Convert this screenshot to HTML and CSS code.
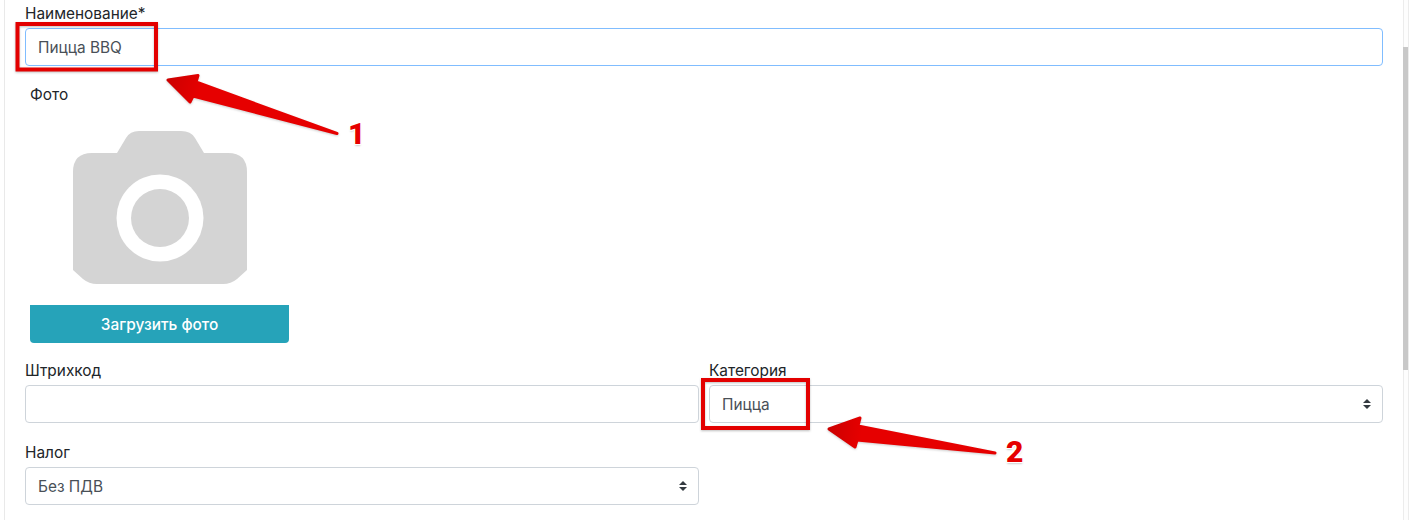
FILE: index.html
```html
<!DOCTYPE html>
<html lang="ru">
<head>
<meta charset="utf-8">
<title>Товар</title>
<link rel="stylesheet" href="styles.css">
</head>
<body>
<div class="page">
  <main class="panel">
    <div class="field field-name">
      <label class="label" for="name">Наименование*</label>
      <input class="control control-focus" id="name" type="text" value="Пицца BBQ">
    </div>
    <section class="photo">
      <div class="photo-label">Фото</div>
      <svg class="camera" width="174" height="153" viewBox="0 0 174 153" aria-hidden="true">
        <path fill="#d4d4d4" d="M44 22 L53 7 Q57 0 66 0 H108 Q118 0 122 7 L131 22 H155 Q174 22 174 41 V139 L164 148 Q158 153 150 153 H24 Q16 153 10 148 L0 139 V41 Q0 22 19 22 Z"/>
        <circle cx="87" cy="87" r="43.5" fill="#fff"/>
        <circle cx="87" cy="87" r="29" fill="#d4d4d4"/>
      </svg>
      <button class="upload" type="button">Загрузить фото</button>
    </section>
    <div class="grid">
      <div class="field">
        <label class="label" for="barcode">Штрихкод</label>
        <input class="control" id="barcode" type="text">
      </div>
      <div class="field">
        <label class="label" for="category">Категория</label>
        <div class="select-wrap">
          <select class="control" id="category"><option>Пицца</option></select>
          <svg class="updown" width="8" height="10" viewBox="0 0 8 10" aria-hidden="true"><path fill="#343a40" d="M4 0 L8 4 H0 Z M0 6 H8 L4 10 Z"/></svg>
        </div>
      </div>
      <div class="field">
        <label class="label" for="tax">Налог</label>
        <div class="select-wrap">
          <select class="control" id="tax"><option>Без ПДВ</option></select>
          <svg class="updown" width="8" height="10" viewBox="0 0 8 10" aria-hidden="true"><path fill="#343a40" d="M4 0 L8 4 H0 Z M0 6 H8 L4 10 Z"/></svg>
        </div>
      </div>
    </div>
  </main>
  <div class="scroll-track"><div class="scroll-thumb"></div></div>
</div>

<svg class="marks" width="1412" height="520" viewBox="0 0 1412 520" aria-hidden="true">
  <defs>
    <linearGradient id="a1" x1="167" y1="79" x2="337" y2="134" gradientUnits="userSpaceOnUse">
      <stop offset="0" stop-color="#cc0000"/><stop offset=".2" stop-color="#e60000"/><stop offset="1" stop-color="#e60000"/>
    </linearGradient>
    <linearGradient id="a2" x1="828" y1="429" x2="995" y2="453" gradientUnits="userSpaceOnUse">
      <stop offset="0" stop-color="#cc0000"/><stop offset=".2" stop-color="#e60000"/><stop offset="1" stop-color="#e60000"/>
    </linearGradient>
  </defs>
  <rect class="box" x="17.5" y="24" width="138.5" height="45.5"/>
  <rect class="box" x="703" y="380" width="105" height="48"/>
  <path class="arrow" fill="url(#a1)" stroke="url(#a1)" d="M168 80 L198 75.500 L196 82 L337 133.500 L193 96 L190 102 Z"/>
  <path class="arrow" fill="url(#a2)" stroke="url(#a2)" d="M829 429 L860 418 L858 426 L995 453 L857 440 L855 447 Z"/>
</svg>
<span class="num num-1">1</span>
<span class="num num-2">2</span>
</body>
</html>
```
FILE: styles.css
```css
* { box-sizing: border-box; }
html, body { margin: 0; height: 520px; overflow: hidden; background: #fff; }
body {
  font-family: Inter, "Noto Sans", sans-serif;
  font-size: 15.4px;
  color: #212529;
  position: relative;
}
.page { display: flex; width: 1412px; height: 520px; padding-left: 4px; }
.panel {
  width: 1399px;
  height: 520px;
  border-left: 1px solid #e9e9e9;
  padding: 4px 20px 0 20px;
}
.label { display: block; line-height: 20px; margin-bottom: 4px; }
.control {
  display: block;
  width: 100%;
  height: 38px;
  padding: 0 12px;
  font: inherit;
  color: #495057;
  background: #fff;
  border: 1px solid #ced4da;
  border-radius: 4px;
  outline: 0;
  appearance: none;
}
.control-focus { border-color: #80bdff; }
.photo { padding: 19px 0 0 5px; }
.photo-label { line-height: 20px; }
.camera { display: block; margin: 26px 0 0 43px; }
.upload {
  display: block;
  width: 259px;
  height: 38px;
  margin-top: 21px;
  border: 0;
  border-radius: 0 0 4px 4px;
  background: #26a3b9;
  color: #fff;
  font: 500 15.4px Inter, "Noto Sans", sans-serif;
}
.grid {
  display: grid;
  grid-template-columns: 674px 674px;
  column-gap: 10px;
  row-gap: 20px;
  margin-top: 18px;
}
.select-wrap { position: relative; }
.updown { position: absolute; right: 12px; top: 14px; }
.scroll-track {
  width: 6px;
  height: 520px;
  border-left: 1px solid #ececec;
  border-right: 1px solid #ececec;
  background: #fdfdfd;
}
.scroll-thumb { width: 5px; height: 323px; margin: 47px 0 0 -1px; background: #c8c8c8; }
.marks { position: absolute; left: 0; top: 0; pointer-events: none; }
.box { fill: none; stroke: #e30000; stroke-width: 4; filter: drop-shadow(0 1px 1px rgba(0,0,0,.25)); }
.arrow { stroke-width: 3; stroke-linejoin: round; filter: drop-shadow(0 1px 1px rgba(0,0,0,.2)); }
.num {
  position: absolute;
  font: 900 30px/30px Roboto, sans-serif;
  color: #e60000;
  text-shadow: -1px 0 #fff, 1px 0 #fff, 0 -1px #fff, 0 1px #fff, -1px -1px #fff, 1px 1px #fff, 1px -1px #fff, -1px 1px #fff, 0 2px 2px rgba(0,0,0,.2);
}
.num-1 { left: 348px; top: 119px; }
.num-2 { left: 1006px; top: 437px; }
```
